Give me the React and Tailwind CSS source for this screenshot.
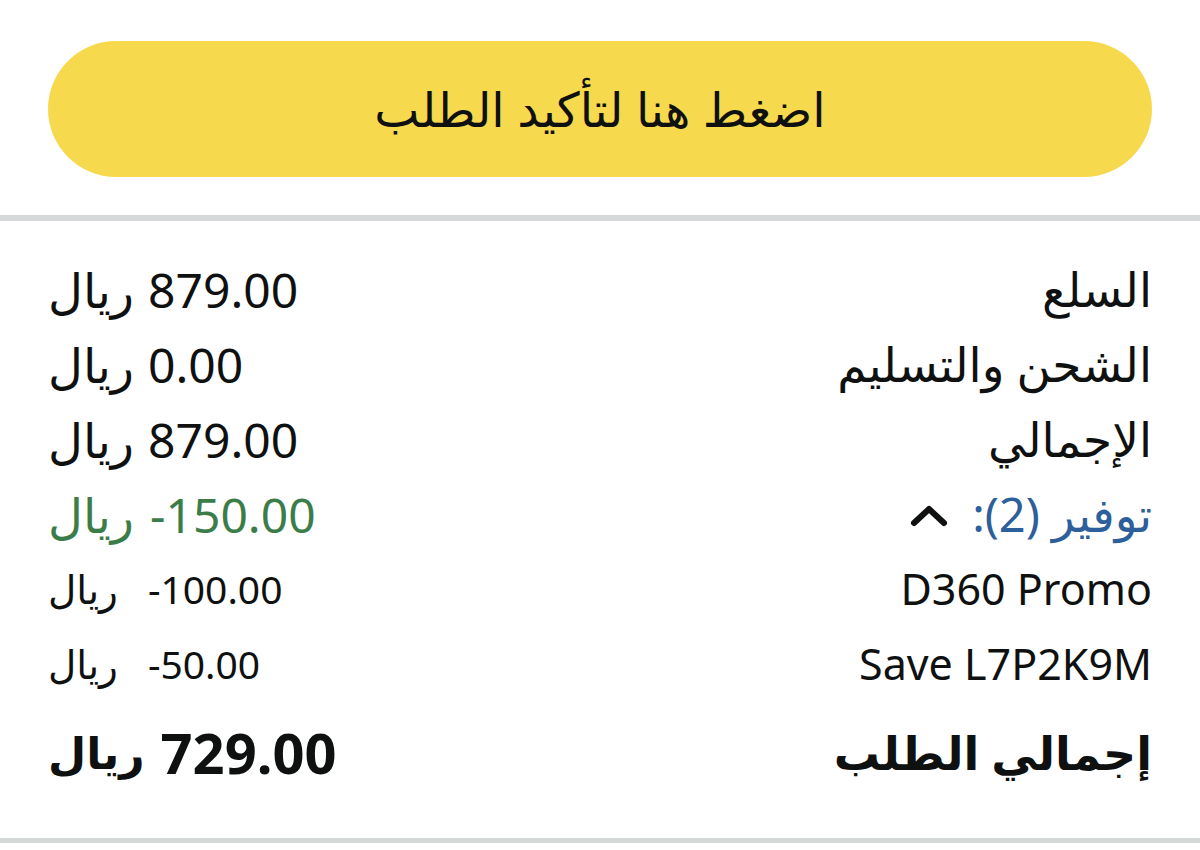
import React from "react";

const FONT = "font-['Noto_Sans','DejaVu_Sans',sans-serif]";

function Amount({ value, className = "", gap = "gap-[14px]", currencyClass = "" }) {
  return (
    <div dir="ltr" className={`flex items-center ${gap} ${className}`}>
      <span className={currencyClass}>ريال</span>
      <span>{value}</span>
    </div>
  );
}

function Row({ label, value, labelClass = "", valueClass = "", gap }) {
  return (
    <div className="flex h-[75px] items-center justify-between">
      <div className={labelClass}>{label}</div>
      <Amount value={value} className={valueClass} gap={gap} />
    </div>
  );
}

function ChevronUp() {
  return (
    <svg width="38" height="24" viewBox="0 0 38 24" className="text-[#0F1111]">
      <polyline
        points="4,20 19,6 34,20"
        fill="none"
        stroke="currentColor"
        strokeWidth="6"
        strokeLinecap="round"
        strokeLinejoin="round"
      />
    </svg>
  );
}

export default function App() {
  return (
    <div dir="rtl" className={`h-[850px] w-[1200px] overflow-hidden bg-white text-[#0F1111] ${FONT}`}>
      <div className="px-12 pb-[38px] pt-[41px]">
        <button className="flex h-[136px] w-full items-center justify-center rounded-full bg-[#F7D94D] text-[48px] text-[#0F1111]">
          اضغط هنا لتأكيد الطلب
        </button>
      </div>
      <div className="h-[6px] bg-[#D5D9D9]" />

      <div className="px-12 pb-[41px] pt-[31px]">
        <Row label="السلع" value="879.00" labelClass="text-[47px]" valueClass="text-[48px]" />
        <Row label="الشحن والتسليم" value="0.00" labelClass="text-[47px]" valueClass="text-[48px]" />
        <Row label="الإجمالي" value="879.00" labelClass="text-[47px]" valueClass="text-[48px]" />
        <div className="flex h-[75px] items-center justify-between">
          <div className="flex items-center gap-6">
            <span className="text-[47px] text-[#2D5F9B]">توفير (2):</span>
            <ChevronUp />
          </div>
          <Amount value="-150.00" className="text-[48px] text-[#3A7D48]" gap="gap-[16px]" />
        </div>
        <Row label="D360 Promo" value="-100.00" labelClass="text-[43px]" valueClass="text-[39px]" gap="gap-[30px]" />
        <Row label="Save L7P2K9M" value="-50.00" labelClass="text-[43px]" valueClass="text-[39px]" gap="gap-[30px]" />
        <div className="mt-[5px] flex h-[90px] items-center justify-between font-bold">
          <div className="text-[46px]">إجمالي الطلب</div>
          <Amount value="729.00" className="text-[56px]" gap="gap-[16px]" currencyClass="text-[44px]" />
        </div>
      </div>
      <div className="h-[5px] bg-[#D5D9D9]" />
    </div>
  );
}
